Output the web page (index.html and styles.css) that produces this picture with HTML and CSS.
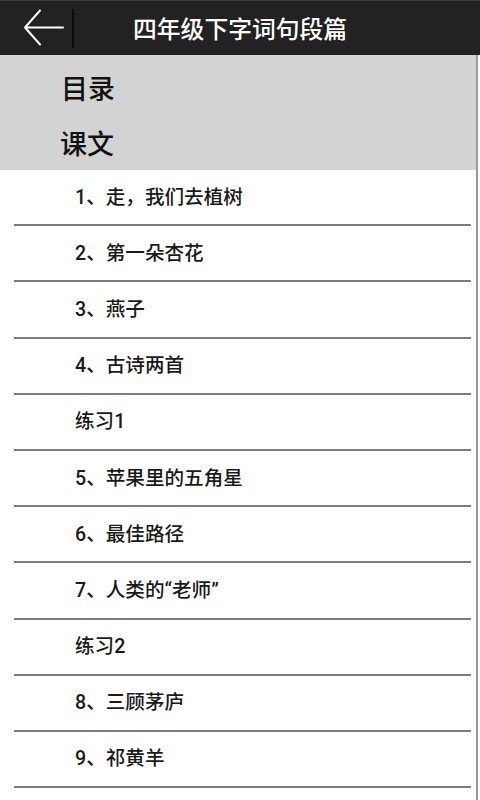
FILE: index.html
```html
<!DOCTYPE html>
<html lang="zh-CN">
<head>
<meta charset="utf-8">
<title>四年级下字词句段篇</title>
<link rel="stylesheet" href="styles.css">
</head>
<body>
<header class="topbar">
  <div class="back">
    <svg width="44" height="40" viewBox="0 0 44 40" aria-hidden="true">
      <path d="M41 18.5 H3 M18 1.5 L3 18.5 L18 35.5" fill="none" stroke="#ffffff" stroke-width="2" stroke-linecap="round" stroke-linejoin="round"/>
    </svg>
  </div>
  <div class="divider"></div>
  <h1 class="title">四年级下字词句段篇</h1>
</header>
<main class="content">
  <section class="heading">
    <div class="heading-item">目录</div>
    <div class="heading-item sub">课文</div>
  </section>
  <ul class="list">
    <li class="row">1、走，我们去植树</li>
    <li class="row">2、第一朵杏花</li>
    <li class="row">3、燕子</li>
    <li class="row">4、古诗两首</li>
    <li class="row">练习1</li>
    <li class="row">5、苹果里的五角星</li>
    <li class="row">6、最佳路径</li>
    <li class="row">7、人类的“老师”</li>
    <li class="row">练习2</li>
    <li class="row">8、三顾茅庐</li>
    <li class="row">9、祁黄羊</li>
  </ul>
</main>
</body>
</html>
```
FILE: styles.css
```css
* { box-sizing: border-box; }
html, body { margin: 0; padding: 0; }
body {
  width: 480px;
  height: 800px;
  overflow: hidden;
  background: #ffffff;
  font-family: "Roboto", "Noto Sans CJK SC", sans-serif;
  color: #1a1a1a;
}
.topbar {
  height: 55px;
  background: #222222;
  border-top: 1px solid #3a3a3a;
  display: flex;
  align-items: center;
}
.back {
  width: 72px;
  height: 54px;
  display: flex;
  align-items: center;
  padding-left: 22px;
  padding-top: 2px;
}
.back svg { display: block; }
.divider {
  width: 2px;
  height: 39px;
  background: #0c0c0c;
}
.title {
  margin: 0 0 0 59px;
  font-size: 23.8px;
  font-weight: 500;
  color: #ffffff;
  font-family: "Noto Sans CJK SC", sans-serif;
  line-height: 1;
  padding-bottom: 1px;
}
.content {
  width: 478px;
  height: 745px;
  border-right: 2px solid #9a9a9a;
  overflow: hidden;
}
.heading {
  background: #d3d3d3;
  height: 115px;
  padding: 5px 0 0 60px;
}
.heading-item {
  height: 55px;
  display: flex;
  align-items: center;
  font-size: 27px;
  font-weight: 500;
  font-family: "Noto Sans CJK SC", sans-serif;
  color: #111111;
  padding-left: 1px;
}
.heading-item.sub { padding-left: 0; }
.list {
  list-style: none;
  margin: 0;
  padding: 0;
}
.row {
  height: 56.2px;
  margin: 0 5px 0 14px;
  border-bottom: 2px solid #7c7c7c;
  display: flex;
  align-items: center;
  padding-left: 61px;
  padding-bottom: 4px;
  font-size: 19.6px;
  font-weight: 500;
  color: #1a1a1a;
}
```
